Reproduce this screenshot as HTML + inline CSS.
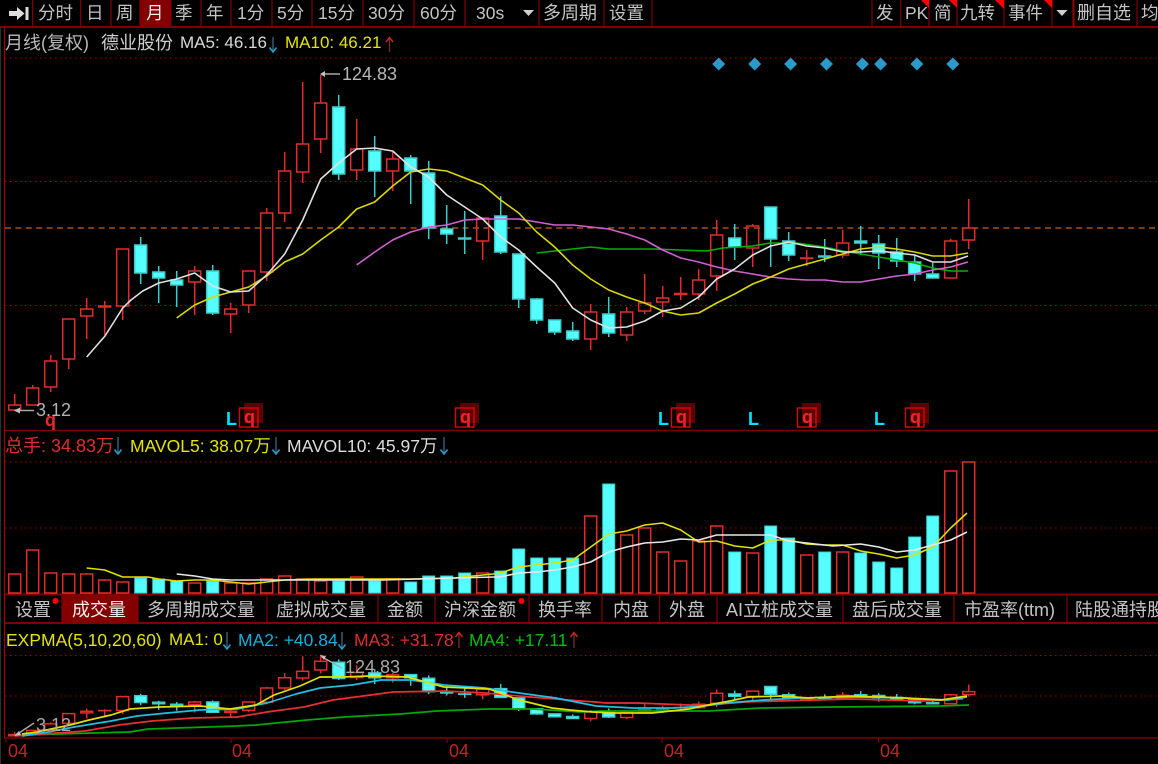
<!DOCTYPE html>
<html>
<head>
<meta charset="utf-8">
<style>
html,body{margin:0;padding:0;background:#000;}
#p{position:relative;width:1158px;height:764px;overflow:hidden;background:#000;font-family:"Liberation Sans","Noto Sans CJK SC",sans-serif;filter:blur(.3px);}
#p svg{position:absolute;left:0;top:0;}
.t{position:absolute;white-space:nowrap;font-size:17.5px;line-height:20px;height:20px;color:#c4c4c4;}
.n{font-size:17px;}
.m{font-size:18px;}
.q{position:absolute;white-space:nowrap;font-size:18px;line-height:18px;font-weight:bold;color:#e8282c;}
.L{position:absolute;white-space:nowrap;font-size:18px;line-height:18px;color:#00e4ff;font-weight:bold;}
</style>
</head>
<body>
<div id="p">
<svg width="1158" height="764" viewBox="0 0 1158 764">
<defs>
<g id="cd" fill="none" stroke-width="1.5">
<path vector-effect="non-scaling-stroke" stroke="#e52a2c" d="
M14.7 394V405M8.7 405H20.7V410H8.7ZM14.7 410V411
M32.7 385V388M26.7 388H38.7V405H26.7Z
M50.7 355V361M44.7 361H56.7V387H44.7ZM50.7 387V392
M68.7 319M62.7 319H74.7V359H62.7ZM68.7 359V369
M86.7 298V309M80.7 309H92.7V316H80.7ZM86.7 316V339
M104.7 301V306M98.7 306H110.7V307H98.7ZM104.7 307V335
M122.7 249M116.7 249H128.7V306H116.7ZM122.7 306V320
M194.7 266V271M188.7 271H200.7V282H188.7ZM194.7 282V315
M230.7 303V309M224.7 309H236.7V314H224.7ZM230.7 314V333
M248.7 271M242.7 271H254.7V305H242.7ZM248.7 305V313
M266.7 208V213M260.7 213H272.7V272H260.7ZM266.7 272V281
M284.7 152V171M278.7 171H290.7V213H278.7ZM284.7 213V222
M302.7 82V144M296.7 144H308.7V172H296.7ZM302.7 172V183
M320.7 75V103M314.7 103H326.7V139H314.7ZM320.7 139V153
M356.7 119V149M350.7 149H362.7V170H350.7ZM356.7 170V180
M392.7 152V159M386.7 159H398.7V171H386.7ZM392.7 171V191
M482.7 218M476.7 218H488.7V241H476.7ZM482.7 241V260
M590.7 304V312M584.7 312H596.7V339H584.7ZM590.7 339V350
M626.7 307V312M620.7 312H632.7V335H620.7ZM626.7 335V341
M644.7 274V303M638.7 303H650.7V311H638.7ZM644.7 311V314
M662.7 286V298M656.7 298H668.7V302H656.7ZM662.7 302V317
M680.7 277V293.5M674.7 293.5H686.7V294.5H674.7ZM680.7 294.5V300
M698.7 269V280M692.7 280H704.7V294H692.7ZM698.7 294V300
M716.7 220V235M710.7 235H722.7V276H710.7ZM716.7 276V291
M752.7 224V226M746.7 226H758.7V248H746.7ZM752.7 248V267
M806.7 250V258M800.7 258H812.7V258.5H800.7ZM806.7 258.5V266
M842.7 230V243M836.7 243H848.7V255H836.7ZM842.7 255V258
M950.7 239V241M944.7 241H956.7V278H944.7Z
M968.7 199V228M962.7 228H974.7V240H962.7ZM968.7 240V249"/>
<path vector-effect="non-scaling-stroke" stroke="#3ccccc" fill="#55ffff" d="
M140.7 237V245M134.7 245H146.7V273H134.7ZM140.7 273V284
M158.7 266V272M152.7 272H164.7V278H152.7ZM158.7 278V303
M176.7 271V280M170.7 280H182.7V285H170.7ZM176.7 285V307
M212.7 265V271M206.7 271H218.7V313H206.7ZM212.7 313V315
M338.7 95V107M332.7 107H344.7V174H332.7ZM338.7 174V180
M374.7 136V151M368.7 151H380.7V171H368.7ZM374.7 171V197
M410.7 155V158M404.7 158H416.7V171H404.7ZM410.7 171V204
M428.7 161V173M422.7 173H434.7V228H422.7ZM428.7 228V239
M446.7 205V229M440.7 229H452.7V234H440.7ZM446.7 234V244
M464.7 211V238M458.7 238H470.7V239H458.7ZM464.7 239V254
M500.7 196V216M494.7 216H506.7V252H494.7ZM500.7 252V254
M518.7 254M512.7 254H524.7V299H512.7ZM518.7 299V308
M536.7 298V299M530.7 299H542.7V320H530.7ZM536.7 320V324
M554.7 320M548.7 320H560.7V332H548.7ZM554.7 332V335
M572.7 322V331M566.7 331H578.7V339H566.7ZM572.7 339V341
M608.7 297V314M602.7 314H614.7V333H602.7ZM608.7 333V337
M734.7 224V238M728.7 238H740.7V247H728.7ZM734.7 247V260
M770.7 207M764.7 207H776.7V239H764.7ZM770.7 239V267
M788.7 232V241M782.7 241H794.7V255H782.7ZM788.7 255V261
M824.7 239V256M818.7 256H830.7V257H818.7ZM824.7 257V262
M860.7 226V241M854.7 241H866.7V243H854.7ZM860.7 243V255
M878.7 235V244M872.7 244H884.7V253H872.7ZM878.7 253V269
M896.7 238V252M890.7 252H902.7V261H890.7ZM896.7 261V267
M914.7 255V262M908.7 262H920.7V274H908.7ZM914.7 274V281
M932.7 263V274M926.7 274H938.7V278H926.7Z"/>
</g>
</defs>

<!-- selected backgrounds -->
<rect x="140" y="0" width="31" height="26" fill="#840000"/>
<rect x="62" y="595" width="76" height="28" fill="#840000"/>

<!-- frame lines -->
<g stroke="#7f0000" stroke-width="2" fill="none">
<path d="M0 27H1158"/>
<path d="M4 430.5H1158" stroke-width="1.6"/>
<path d="M4 594.5H1158"/>
<path d="M4 623H1158"/>
<path d="M4 738H1158" stroke-width="1.4"/>
</g>
<path d="M4.5 27V738" stroke="#a00000" stroke-width="1.2"/>
<path d="M6 738V743M231 738V743M447 738V743M662 738V743M878.7 738V743" stroke="#7f0000" stroke-width="1.2"/>
<path d="M0.5 27V764" stroke="#303030" stroke-width="1"/>

<!-- toolbar separators -->
<path stroke="#7f0000" stroke-width="1.2" d="M32.6 0V27M80.7 0V27M111 0V27M140 0V27M171 0V27M201 0V27M231 0V27M272 0V27M312 0V27M363 0V27M414 0V27M465 0V27M539 0V27M604 0V27M652 0V27M872 0V27M900.6 0V27M929 0V27M957 0V27M1004 0V27M1052 0V27M1073.5 0V27M1137 0V27"/>
<path stroke="#9a0000" stroke-width="2" d="M1073.5 0V27"/>
<!-- tab separators -->
<path stroke="#7f0000" stroke-width="1.2" d="M62 595V623M138 595V623M267 595V623M378 595V623M435 595V623M529 595V623M602 595V623M659.5 595V623M717 595V623M843 595V623M954 595V623M1067 595V623"/>

<!-- toolbar icons -->
<path fill="#dcdcdc" d="M9 11H17V7L24.5 13.5L17 20V16H9ZM25.5 7H28.5V20H25.5Z"/>
<path fill="#cfcfcf" d="M523 10H534L528.5 16ZM1056.5 10H1067.5L1062 16Z"/>
<path fill="#ff0000" d="M921 0H929V8ZM949 0H957V8ZM995 0H1004V9ZM1044 0H1052V8Z"/>
<circle cx="55.5" cy="601" r="3" fill="#ff0000"/>
<circle cx="521.5" cy="601" r="3" fill="#ff0000"/>

<!-- grid -->
<g stroke="#a00000" stroke-width="1.1" stroke-dasharray="1.5 3.5" fill="none">
<path d="M5 58H1158M5 181.5H1158M5 305.5H1158"/>
<path d="M5 462H1158M5 528H1158"/>
<path d="M5 655.5H1158M5 696H1158"/>
</g>
<path d="M5 228H1158" stroke="#c8601c" stroke-width="1.3" stroke-dasharray="6 4.4"/>

<!-- diamonds -->
<path fill="#2a9bc8" d="M718.7 57.5l6.5 6.5-6.5 6.5-6.5-6.5ZM754.7 57.5l6.5 6.5-6.5 6.5-6.5-6.5ZM790.6 57.5l6.5 6.5-6.5 6.5-6.5-6.5ZM826.5 57.5l6.5 6.5-6.5 6.5-6.5-6.5ZM862.4 57.5l6.5 6.5-6.5 6.5-6.5-6.5ZM880.6 57.5l6.5 6.5-6.5 6.5-6.5-6.5ZM916.9 57.5l6.5 6.5-6.5 6.5-6.5-6.5ZM952.8 57.5l6.5 6.5-6.5 6.5-6.5-6.5Z"/>

<!-- main candles -->
<use href="#cd"/>

<!-- main MAs -->
<g fill="none" stroke-width="1.6" stroke-linejoin="round">
<polyline stroke="#00b000" points="536.7,253 554.7,251 572.7,249 590.7,247 608.7,249 653,249 706.7,251 723,248 752.7,246 770.7,243 796.7,243 824.7,247 842.7,251 860.7,254 878.7,257 896.7,260 914.7,263 932.7,268 950.7,271 968,271"/>
<polyline stroke="#d060d0" points="356.7,265 374.7,252 392.7,240 410.7,232 428.7,227 446.7,225 464.7,220 482.7,219 500.7,219 518.7,219 536.7,222 554.7,225 572.7,225 590.7,227 608.7,229 626.7,234 644.7,240 662.7,250 680.7,258 698.7,262 716.7,267 734.7,271 752.7,274 770.7,277 788.7,279 806.7,280 824.7,280 842.7,282 860.7,282 878.7,279 896.7,276 914.7,274 932.7,270 950.7,267 968,262"/>
<polyline stroke="#d8d800" points="176.7,318 194.7,305 212.7,297 230.7,292 248.7,287 266.7,276 284.7,262 302.7,254 320.7,240 338.7,227 356.7,209 374.7,202 392.7,186 410.7,172 428.7,169 446.7,171 464.7,178 482.7,185 500.7,200 518.7,213 536.7,232 554.7,247 572.7,265 590.7,279 608.7,290 626.7,297 644.7,303 662.7,311 680.7,315 698.7,313 716.7,303 734.7,294 752.7,284 770.7,277 788.7,269 806.7,264 824.7,259 842.7,254 860.7,249 878.7,247 896.7,249 914.7,252 932.7,256 950.7,256 968,253"/>
<polyline stroke="#e0e0e0" points="86.7,357 105,336 122.7,308 131,300 142.7,291 158.7,283 176.7,279 194.7,273 212.7,286 230.7,292 248.7,291 266.7,275 284.7,254 302.7,220 320.7,179 338.7,163 356.7,149 374.7,148 392.7,151 410.7,167 428.7,177 446.7,195 464.7,207 482.7,219 500.7,237 518.7,250 536.7,267 554.7,283 572.7,308 590.7,320 608.7,328 626.7,327 644.7,321 662.7,311 680.7,308 698.7,297 716.7,279 734.7,269 752.7,255 770.7,246 788.7,242 806.7,246 824.7,248 842.7,252 860.7,252 878.7,251 896.7,253 914.7,255 932.7,262 950.7,262 968,256"/>
</g>

<!-- high/low markers -->
<path d="M322 74H340M15 410.5H34" stroke="#a8a8a8" stroke-width="1.5"/>
<path fill="#c0c0c0" d="M320 74l5-3v6ZM14 410.5l6-3v6Z"/>

<!-- q boxes -->
<g>
<rect x="244" y="403" width="19" height="20" fill="#5c0000"/>
<rect x="239.5" y="408" width="18.5" height="19" fill="none" stroke="#e00000" stroke-width="1.4"/>
<rect x="460" y="403" width="19" height="20" fill="#5c0000"/>
<rect x="455.5" y="408" width="18.5" height="19" fill="none" stroke="#e00000" stroke-width="1.4"/>
<rect x="676" y="403" width="19" height="20" fill="#5c0000"/>
<rect x="671.5" y="408" width="18.5" height="19" fill="none" stroke="#e00000" stroke-width="1.4"/>
<rect x="802" y="403" width="19" height="20" fill="#5c0000"/>
<rect x="797.5" y="408" width="18.5" height="19" fill="none" stroke="#e00000" stroke-width="1.4"/>
<rect x="910" y="403" width="19" height="20" fill="#5c0000"/>
<rect x="905.5" y="408" width="18.5" height="19" fill="none" stroke="#e00000" stroke-width="1.4"/>
</g>

<!-- volume -->
<path fill="none" stroke="#e52a2c" stroke-width="1.5" d="M8.7 593V574H20.7V593ZM26.7 593V550H38.7V593ZM44.7 593V573H56.7V593ZM62.7 593V574H74.7V593ZM80.7 593V574H92.7V593ZM98.7 593V580H110.7V593ZM116.7 593V582H128.7V593ZM188.7 593V583H200.7V593ZM224.7 593V583H236.7V593ZM242.7 593V583H254.7V593ZM260.7 593V579H272.7V593ZM278.7 593V576H290.7V593ZM296.7 593V579H308.7V593ZM314.7 593V581H326.7V593ZM350.7 593V577H362.7V593ZM386.7 593V579H398.7V593ZM476.7 593V573H488.7V593ZM584.7 593V516H596.7V593ZM620.7 593V535H632.7V593ZM638.7 593V528H650.7V593ZM656.7 593V552H668.7V593ZM674.7 593V561H686.7V593ZM692.7 593V541H704.7V593ZM710.7 593V526H722.7V593ZM746.7 593V553H758.7V593ZM800.7 593V555H812.7V593ZM836.7 593V552H848.7V593ZM944.7 593V471H956.7V593ZM962.7 593V462H974.7V593Z"/>
<path fill="#55ffff" stroke="#3ccccc" stroke-width="1" d="M134.7 593V578H146.7V593ZM152.7 593V579H164.7V593ZM170.7 593V581H182.7V593ZM206.7 593V581H218.7V593ZM332.7 593V581H344.7V593ZM368.7 593V581H380.7V593ZM404.7 593V582H416.7V593ZM422.7 593V576H434.7V593ZM440.7 593V576H452.7V593ZM458.7 593V573H470.7V593ZM494.7 593V571H506.7V593ZM512.7 593V549H524.7V593ZM530.7 593V558H542.7V593ZM548.7 593V558H560.7V593ZM566.7 593V558H578.7V593ZM602.7 593V484H614.7V593ZM728.7 593V552H740.7V593ZM764.7 593V526H776.7V593ZM782.7 593V538H794.7V593ZM818.7 593V552H830.7V593ZM854.7 593V553H866.7V593ZM872.7 593V562H884.7V593ZM890.7 593V568H902.7V593ZM908.7 593V537H920.7V593ZM926.7 593V516H938.7V593Z"/>
<g fill="none" stroke-width="1.6" stroke-linejoin="round">
<polyline stroke="#e0e000" points="86.7,568 104.7,570 122.7,577 148,577 158.7,579 176.7,581 194.7,580 212.7,580 230.7,582 248.7,584 266.7,582 284.7,580 313,579 383,579 417,579 455,578 473,576 493,574 500,573 518.7,567 536.7,565 554.7,563 572.7,560 590.7,547 608.7,534 626.7,531 644.7,525 662.7,523 680.7,530 698.7,542 716.7,541 734.7,546 752.7,548 770.7,540 788.7,540 806.7,544 824.7,545 842.7,545 860.7,551 878.7,554 896.7,558 914.7,555 932.7,547 950.7,528 967,513"/>
<polyline stroke="#e8e8e8" points="176.7,574 194.7,576 212.7,579 230.7,580 266.7,580 383,580 417,579 455,578 493,577 500,577 518.7,573 536.7,572 554.7,570 572.7,567 590.7,562 608.7,552 626.7,547 644.7,543 662.7,542 680.7,539 698.7,540 716.7,535 770.7,535 788.7,541 806.7,543 833,546 860.7,544 878.7,547 896.7,552 914.7,550 932.7,545 950.7,540 967,532"/>
</g>

<!-- EXPMA candles -->
<use href="#cd" transform="translate(0,636.32) scale(1,.2424)"/>
<g fill="none" stroke-width="1.7" stroke-linejoin="round">
<polyline stroke="#00a800" points="22,735 93,733 130,732 148,729 237,726 256,725 307,720 344,717 400,714 437,711 489,709 533,709 581,712 600,711 708,711 761,708 833,707 941,706 969,705"/>
<polyline stroke="#e83030" points="15,736 85,731 119,725 152,721 193,718 237,717 267,712 304,707 333,700 363,696 393,692 444,691 485,693 530,697 581,701 596,702 606,703 637,703 689,705 708,705 745,702 778,701 852,699 922,701 963,699"/>
<polyline stroke="#20c0e0" points="22,736 48,732 74,727 111,721 137,716 167,713 200,710 237,709 267,703 296,694 320,688 352,685 381,680 411,680 444,685 485,688 519,693 556,698 581,703 596,706 633,708 674,708 704,706 726,703 763,700 800,698 852,697 904,698 948,700 967,697"/>
<polyline stroke="#e0e000" points="22,734 37,732 70,725 89,720 111,715 130,709 159,707 200,706 230,709 256,705 274,695 300,686 320,677 341,677 370,676 407,677 422,681 444,687 489,689 519,700 552,708 570,710 593,712 615,713 652,713 689,709 708,705 730,701 748,697 782,696 808,698 852,696 904,698 922,699 941,700 967,696"/>
</g>
<path d="M16 735L34 723M322 657L342 668" stroke="#a8a8a8" stroke-width="1.5"/>
<path fill="#c0c0c0" d="M14 736l5-5 2 4ZM320 655l6 1-2 4Z"/>

<!-- small arrows -->
<g fill="none" stroke-width="1.3">
<path stroke="#3a6a80" d="M273 37V51M118 437V453M276 437V453M444 437V453M227 632V648M342 632V648"/>
<path stroke="#2a9bc8" stroke-width="1.6" d="M269.5 47.5L273 52L276.5 47.5M114.5 449.5L118 454L121.5 449.5M272.5 449.5L276 454L279.5 449.5M440.5 449.5L444 454L447.5 449.5M223.5 644.5L227 649L230.5 644.5M338.5 644.5L342 649L345.5 644.5"/>
<path stroke="#703030" d="M389.5 38V52M459 633V648M574 633V648"/>
<path stroke="#d02020" stroke-width="1.6" d="M386 42L389.5 37.5L393 42M455.5 637L459 632.5L462.5 637M570.5 637L574 632.5L577.5 637"/>
</g>
</svg>

<!-- toolbar text -->
<span class="t" style="left:38px;top:3px">分时</span>
<span class="t" style="left:86px;top:3px">日</span>
<span class="t" style="left:116px;top:3px">周</span>
<span class="t" style="left:146px;top:3px;color:#f0f0f0">月</span>
<span class="t" style="left:175px;top:3px">季</span>
<span class="t" style="left:206px;top:3px">年</span>
<span class="t" style="left:237px;top:3px">1分</span>
<span class="t" style="left:277px;top:3px">5分</span>
<span class="t" style="left:318px;top:3px">15分</span>
<span class="t" style="left:368px;top:3px">30分</span>
<span class="t" style="left:420px;top:3px">60分</span>
<span class="t" style="left:476px;top:3px">30s</span>
<span class="t m" style="left:543px;top:3px">多周期</span>
<span class="t" style="left:609px;top:3px">设置</span>
<span class="t" style="left:876px;top:3px">发</span>
<span class="t" style="left:905px;top:3px">PK</span>
<span class="t" style="left:934px;top:3px">简</span>
<span class="t" style="left:960px;top:3px">九转</span>
<span class="t" style="left:1008px;top:3px">事件</span>
<span class="t m" style="left:1077px;top:3px">删自选</span>
<span class="t" style="left:1141px;top:3px">均</span>

<!-- main header -->
<span class="t m" style="left:5px;top:33px;color:#b8b8b8">月线(复权)</span>
<span class="t m" style="left:101px;top:33px;color:#d0d0d0">德业股份</span>
<span class="t n" style="left:180px;top:33px;color:#d8d8d8">MA5: 46.16</span>
<span class="t n" style="left:285px;top:33px;color:#e4e400">MA10: 46.21</span>
<span class="t m" style="left:342px;top:64px;color:#b8b8b8">124.83</span>
<span class="t m" style="left:36px;top:400px;color:#b0b0b0">3.12</span>

<span class="q" style="left:45px;top:411px">q</span>
<span class="L" style="left:226px;top:410px">L</span><span class="q" style="left:244px;top:408px">q</span>
<span class="q" style="left:460px;top:408px">q</span>
<span class="L" style="left:658px;top:410px">L</span><span class="q" style="left:676px;top:408px">q</span>
<span class="L" style="left:748px;top:410px">L</span><span class="q" style="left:802px;top:408px">q</span>
<span class="L" style="left:874px;top:410px">L</span><span class="q" style="left:910px;top:408px">q</span>

<!-- volume header -->
<span class="t m" style="left:5px;top:436px;color:#e02c2c">总手: 34.83万</span>
<span class="t" style="left:130px;top:436px;color:#e4e400">MAVOL5: 38.07万</span>
<span class="t" style="left:287px;top:436px;color:#dcdcdc">MAVOL10: 45.97万</span>

<!-- tabs -->
<span class="t m" style="left:15px;top:600px">设置</span>
<span class="t m" style="left:72px;top:600px;color:#f0f0f0">成交量</span>
<span class="t m" style="left:147px;top:600px">多周期成交量</span>
<span class="t m" style="left:276px;top:600px">虚拟成交量</span>
<span class="t m" style="left:387px;top:600px">金额</span>
<span class="t m" style="left:444px;top:600px">沪深金额</span>
<span class="t m" style="left:538px;top:600px">换手率</span>
<span class="t m" style="left:613px;top:600px">内盘</span>
<span class="t m" style="left:669px;top:600px">外盘</span>
<span class="t m" style="left:726px;top:600px">AI立桩成交量</span>
<span class="t m" style="left:852px;top:600px">盘后成交量</span>
<span class="t m" style="left:964px;top:600px">市盈率(ttm)</span>
<span class="t m" style="left:1075px;top:600px">陆股通持股</span>

<!-- EXPMA header -->
<span class="t" style="left:6px;top:630px;color:#e4e400">EXPMA(5,10,20,60)</span>
<span class="t n" style="left:169px;top:630px;color:#e4e400">MA1: 0</span>
<span class="t" style="left:238px;top:630px;color:#10b0e0">MA2: +40.84</span>
<span class="t" style="left:354px;top:630px;color:#e02c2c">MA3: +31.78</span>
<span class="t" style="left:469px;top:630px;color:#00c000">MA4: +17.11</span>

<span class="t m" style="left:345px;top:657px;color:#a8a8a8">124.83</span>
<span class="t m" style="left:36px;top:715px;color:#a8a8a8">3.12</span>

<!-- axis -->
<span class="t m" style="left:8px;top:741px;color:#c02424">04</span>
<span class="t m" style="left:232px;top:741px;color:#c02424">04</span>
<span class="t m" style="left:449px;top:741px;color:#c02424">04</span>
<span class="t m" style="left:664px;top:741px;color:#c02424">04</span>
<span class="t m" style="left:880px;top:741px;color:#c02424">04</span>
</div>
</body>
</html>
